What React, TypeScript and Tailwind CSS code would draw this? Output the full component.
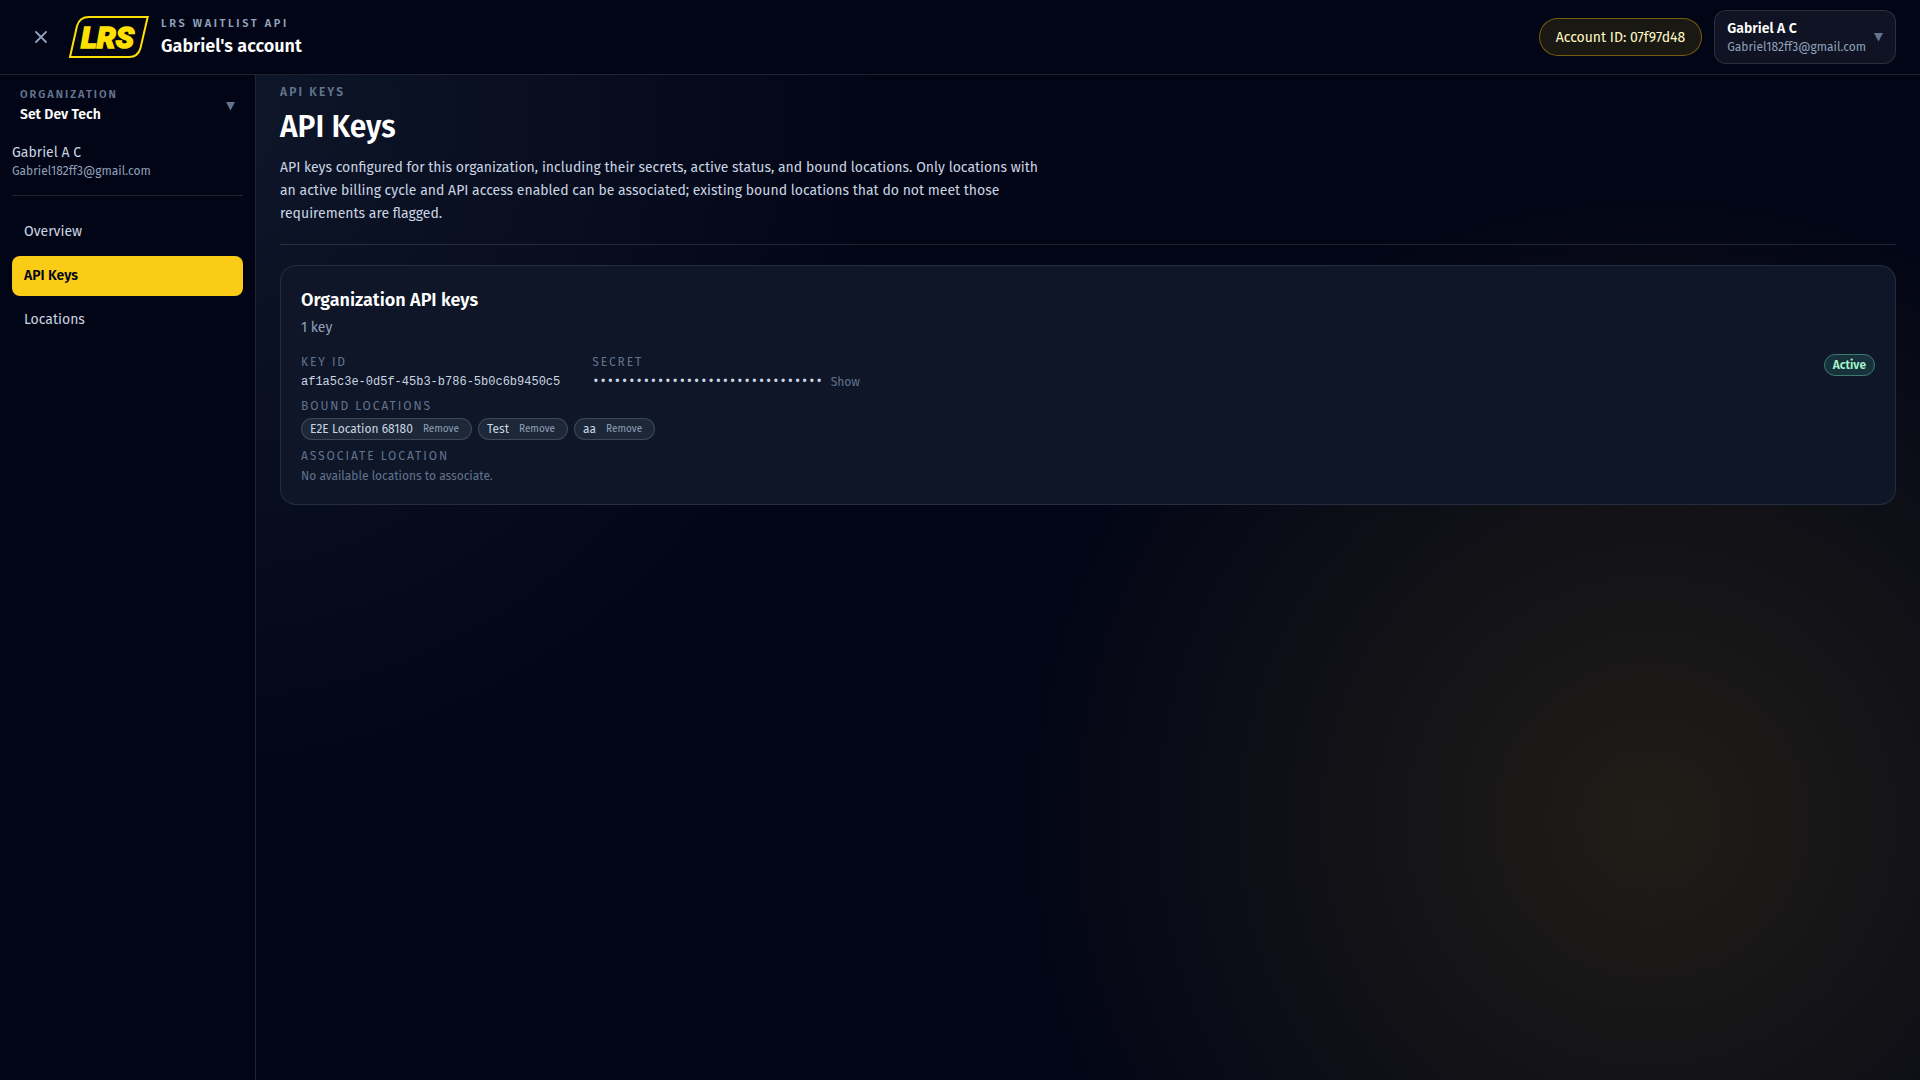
import type { ReactNode } from "react";

const locations = ["E2E Location 68180", "Test", "aa"];

const navItems = [
  { label: "Overview", active: false },
  { label: "API Keys", active: true },
  { label: "Locations", active: false },
];

function Logo() {
  return (
    <svg viewBox="0 0 80 42" className="h-[42px] w-20 shrink-0" role="img" aria-label="LRS">
      <path
        d="M1 41 L8 10 Q10.500 1 20 1 L78.700 1 L71.500 32 Q69 41 60 41 Z"
        fill="none"
        stroke="#ffe000"
        strokeWidth="2"
      />
      <text
        x="12"
        y="32"
        fill="#ffe000"
        stroke="#ffe000"
        strokeWidth="1.500"
        fontFamily="Roboto, sans-serif"
        fontSize="30"
        fontWeight="900"
        fontStyle="italic"
      >
        LRS
      </text>
    </svg>
  );
}

function Caret() {
  return (
    <svg viewBox="0 0 10 10" className="size-[9px] shrink-0 fill-slate-500" aria-hidden="true">
      <path d="M0 0h10L5 9.500z" />
    </svg>
  );
}

function FieldLabel({ children }: { children: ReactNode }) {
  return <div className="text-xs tracking-[0.16em] text-slate-500 uppercase">{children}</div>;
}

function Header() {
  return (
    <header className="flex h-[75px] items-center justify-between border-b border-white/12 bg-[#020516] pr-6 pl-[25px]">
      <div className="flex items-center gap-3">
        <button type="button" aria-label="Close menu" className="flex size-8 items-center justify-center text-slate-400">
          <svg viewBox="0 0 12 12" className="size-3" fill="none" stroke="currentColor" strokeWidth="1.800" strokeLinecap="round">
            <path d="M1 1l10 10M11 1L1 11" />
          </svg>
        </button>
        <Logo />
        <div className="pt-px">
          <div className="text-[11px] leading-4 font-semibold tracking-[0.24em] text-slate-400 uppercase">LRS Waitlist API</div>
          <div className="text-lg leading-7 font-semibold text-white">Gabriel's account</div>
        </div>
      </div>
      <div className="flex items-center gap-3">
        <div className="rounded-full border border-yellow-400/40 bg-yellow-400/10 px-4 pt-[9px] pb-[7px] text-sm text-yellow-100">
          Account ID: 07f97d48
        </div>
        <button type="button" className="flex items-center gap-2 rounded-xl border border-white/12 bg-[#0f1323] px-3 py-2 text-left">
          <span>
            <span className="block text-sm leading-5 font-semibold text-white">Gabriel A C</span>
            <span className="block text-xs text-slate-400">Gabriel182ff3@gmail.com</span>
          </span>
          <Caret />
        </button>
      </div>
    </header>
  );
}

function Sidebar() {
  return (
    <aside className="w-64 shrink-0 border-r border-white/12 bg-[#020516] px-3 pt-1">
      <button type="button" className="flex w-full items-center justify-between p-2 text-left">
        <span>
          <span className="block text-[11px] leading-4 font-semibold tracking-[0.18em] text-slate-500 uppercase">Organization</span>
          <span className="mt-0.5 block text-sm leading-5 font-semibold text-white">Set Dev Tech</span>
        </span>
        <Caret />
      </button>
      <div className="mt-2.5 border-b border-white/12 pb-4">
        <div className="text-sm text-slate-300">Gabriel A C</div>
        <div className="text-xs text-slate-400">Gabriel182ff3@gmail.com</div>
      </div>
      <nav className="mt-4 flex flex-col gap-1">
        {navItems.map((item) => (
          <a
            key={item.label}
            href="#"
            aria-current={item.active ? "page" : undefined}
            className={
              item.active
                ? "rounded-lg bg-[#facc15] px-3 py-2.5 text-sm font-semibold text-slate-950"
                : "rounded-lg px-3 py-2.5 text-sm text-slate-300"
            }
          >
            {item.label}
          </a>
        ))}
      </nav>
    </aside>
  );
}

function KeysCard() {
  return (
    <section className="mt-5 rounded-2xl border border-white/10 bg-[#0e1628] p-5">
      <h2 className="text-lg font-semibold text-white">Organization API keys</h2>
      <p className="mt-1 text-sm text-slate-400">1 key</p>
      <div className="mt-4 flex items-start justify-between">
        <div>
          <div className="flex gap-8">
            <div>
              <FieldLabel>Key ID</FieldLabel>
              <div className="mt-1 font-['Liberation_Mono',monospace] text-xs text-slate-300">
                af1a5c3e-0d5f-45b3-b786-5b0c6b9450c5
              </div>
            </div>
            <div>
              <FieldLabel>Secret</FieldLabel>
              <div className="mt-1 flex items-center gap-2 text-xs">
                <span className="font-['Liberation_Mono',monospace] text-slate-300">{"•".repeat(32)}</span>
                <button type="button" className="text-slate-500">Show</button>
              </div>
            </div>
          </div>
          <div className="mt-2">
            <FieldLabel>Bound locations</FieldLabel>
            <ul className="mt-1 flex gap-1.5">
              {locations.map((name) => (
                <li key={name} className="flex h-[22px] items-center rounded-full border border-white/15 bg-[#1c2738] pr-3 pl-2 text-xs text-slate-300">
                  {name}
                  <button type="button" className="ml-2.5 text-[10px] leading-4 text-slate-400">Remove</button>
                </li>
              ))}
            </ul>
          </div>
          <div className="mt-2">
            <FieldLabel>Associate location</FieldLabel>
            <p className="mt-1 text-xs text-slate-500">No available locations to associate.</p>
          </div>
        </div>
        <span className="rounded-full border border-[#397a71] bg-[#17323a] px-2 py-0.5 text-xs font-semibold text-emerald-200">
          Active
        </span>
      </div>
    </section>
  );
}

export default function App() {
  return (
    <div className="flex min-h-screen flex-col bg-[#020516] bg-[radial-gradient(circle_at_10%_10%,#0f172a_0%,#02051600_35%),radial-gradient(circle_at_86%_76%,#201d17_0%,#02051600_35%)] font-['Fira_Sans','Noto_Sans',sans-serif]">
      <Header />
      <div className="flex flex-1">
        <Sidebar />
        <main className="min-w-0 flex-1 px-6 pt-[9px] pb-6">
          <div className="border-b border-white/12 pb-[19px]">
            <div className="text-xs font-semibold tracking-[0.18em] text-slate-500 uppercase">API Keys</div>
            <h1 className="mt-[9px] text-3xl font-semibold text-white">API Keys</h1>
            <p className="mt-3 max-w-3xl text-sm leading-relaxed text-slate-300">
              API keys configured for this organization, including their secrets, active status, and bound locations. Only
              locations with an active billing cycle and API access enabled can be associated; existing bound locations
              that do not meet those requirements are flagged.
            </p>
          </div>
          <KeysCard />
        </main>
      </div>
    </div>
  );
}
